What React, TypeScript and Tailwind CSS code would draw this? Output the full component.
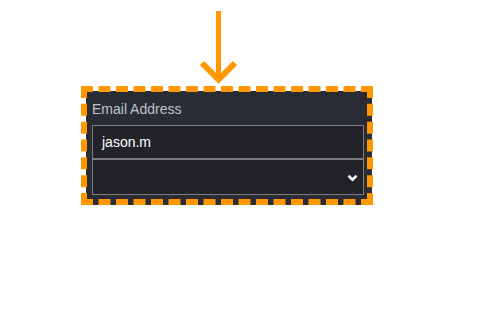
function Arrow() {
  return (
    <svg
      width="42"
      height="76"
      viewBox="0 0 42 76"
      className="ml-[198px] block"
      fill="none"
      stroke="#ff9800"
    >
      <line x1="20.5" y1="3" x2="20.5" y2="68" strokeWidth="5" />
      <polyline points="4,55 20.5,71.5 37,55" strokeWidth="6" strokeLinejoin="miter" />
    </svg>
  );
}

function Chevron() {
  return (
    <svg width="11" height="8" viewBox="0 0 11 8" fill="none" stroke="#ffffff">
      <polyline points="1.5,1.8 5.5,5.6 9.5,1.8" strokeWidth="2.6" />
    </svg>
  );
}

export default function App() {
  return (
    <div className="flex flex-col pt-[8px] font-['Liberation_Sans',Arial,sans-serif]">
      <Arrow />

      <div className="relative ml-[86px] mt-[7px] w-[286px] bg-[#2a2c35] pt-[10px] pb-[10px] pl-[6px] pr-[8px]">
        <div className="mb-[8px] text-[14px] leading-4 text-[#bfc2c9]">Email Address</div>

        <div className="flex h-[34px] items-center border border-[#7d7d80] bg-[#222329] px-[9px] text-[14px] text-white">
          jason.m
        </div>
        <div className="flex h-[36px] items-center justify-end border border-[#7d7d80] bg-[#222329] pr-[5px] pt-[1px]">
          <Chevron />
        </div>

        {/* highlight outline */}
        <div className="pointer-events-none absolute -top-[5px] -left-[5px] -right-[1px] bottom-0 border-[6px] border-dashed border-[#ff9800]" />
      </div>
    </div>
  );
}
